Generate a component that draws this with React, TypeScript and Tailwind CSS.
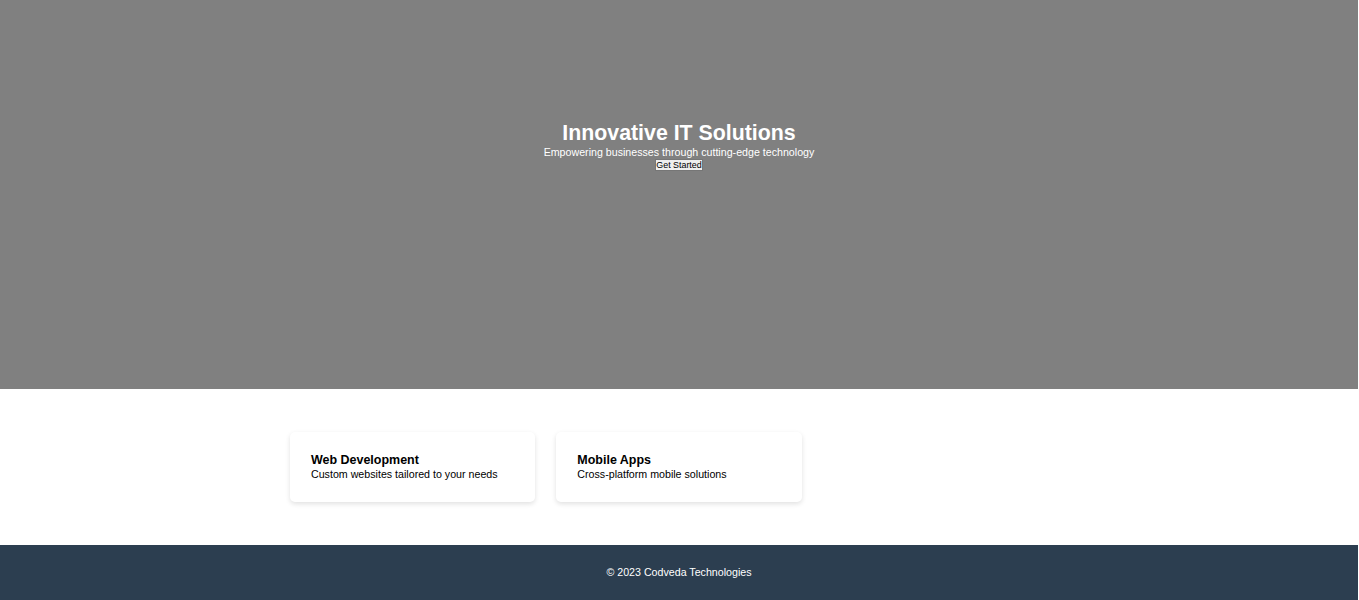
import React from "react";

export default function App() {
  return (
    <div className="w-[1358px] bg-white" style={{ fontFamily: '"Liberation Sans", Arial, sans-serif' }}>
      <section className="h-[389px] bg-[#808080] flex flex-col items-center pt-[121px] text-white">
        <h1 className="text-[21.33px] font-bold leading-[25px]">Innovative IT Solutions</h1>
        <p className="text-[10.67px] leading-[12px]">Empowering businesses through cutting-edge technology</p>
        <button className="mt-[1px] text-[8.9px] leading-[10px] text-black bg-[#efefef] border border-[#767676] px-0 py-0">
          Get Started
        </button>
      </section>
      <section className="py-[43px]">
        <div className="w-[778px] mx-auto grid grid-cols-3 gap-[21px]">
          <div className="h-[70px] rounded-[5px] bg-white shadow-[0_2px_5px_rgba(0,0,0,0.12)] px-[21px] pt-[21px]">
            <h3 className="text-[12.48px] font-bold leading-[15px] text-black">Web Development</h3>
            <p className="text-[10.67px] leading-[13px] text-black">Custom websites tailored to your needs</p>
          </div>
          <div className="h-[70px] rounded-[5px] bg-white shadow-[0_2px_5px_rgba(0,0,0,0.12)] px-[21px] pt-[21px]">
            <h3 className="text-[12.48px] font-bold leading-[15px] text-black">Mobile Apps</h3>
            <p className="text-[10.67px] leading-[13px] text-black">Cross-platform mobile solutions</p>
          </div>
        </div>
      </section>
      <footer className="h-[55px] bg-[#2c3e50] flex items-center justify-center pb-[2px] text-white text-[10.67px]">
        © 2023 Codveda Technologies
      </footer>
    </div>
  );
}
